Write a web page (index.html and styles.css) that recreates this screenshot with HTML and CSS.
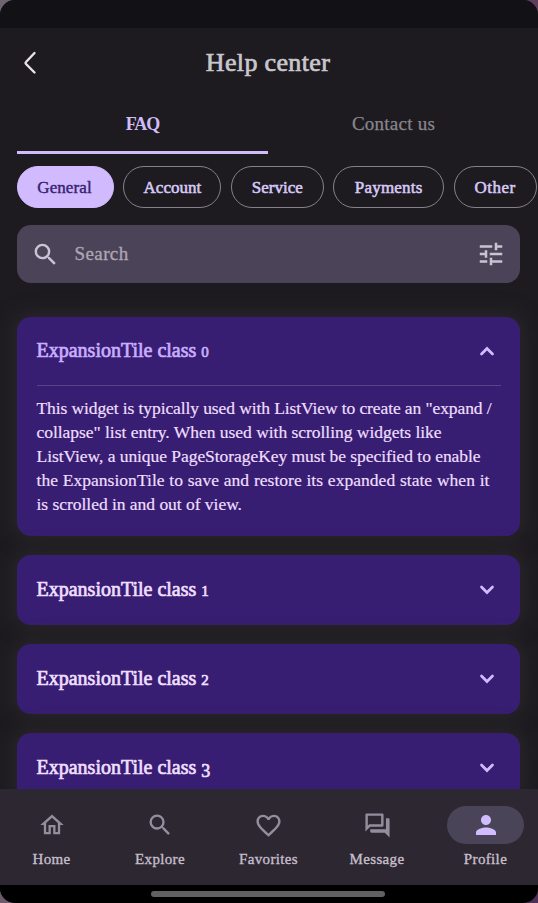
FILE: index.html
```html
<!DOCTYPE html>
<html lang="en">
<head>
<meta charset="utf-8">
<title>Help center</title>
<link rel="stylesheet" href="styles.css">
</head>
<body>
<div class="phone">
  <div class="status"></div>
  <header class="header">
    <svg class="back" width="14" height="24" viewBox="0 0 14 24"><path d="M11.500 2 L3 11 Q2 12 3 13 L11.500 21.500"/></svg>
    <h1>Help center</h1>
  </header>
  <nav class="tabs">
    <div class="tab active"><span>FAQ</span></div>
    <div class="tab"><span>Contact us</span></div>
  </nav>
  <div class="chips">
    <span class="chip selected">General</span>
    <span class="chip account">Account</span>
    <span class="chip service">Service</span>
    <span class="chip payments">Payments</span>
    <span class="chip other">Other</span>
  </div>
  <div class="search">
    <svg width="29" height="29" viewBox="0 0 24 24"><path d="M15.500 14h-.79l-.28-.27A6.470 6.470 0 0 0 16 9.500 6.500 6.500 0 1 0 9.500 16c1.610 0 3.090-.59 4.230-1.570l.27.28v.79l5 4.990L20.490 19l-4.990-5zm-6 0a4.500 4.500 0 1 1 0-9 4.500 4.500 0 0 1 0 9z"/></svg>
    <span>Search</span>
    <svg class="tune" width="30" height="30" viewBox="0 0 24 24"><path d="M3 17v2h6v-2H3zM3 5v2h10V5H3zm10 16v-2h8v-2h-8v-2h-2v6h2zM7 9v2H3v2h4v2h2V9H7zm14 4v-2H11v2h10zm-6-4h2V7h4V5h-4V3h-2v6z"/></svg>
  </div>
  <main class="list">
    <section class="tile open">
      <div class="tile-head"><h2>ExpansionTile class <i>0</i></h2><svg class="chev" width="16" height="10" viewBox="0 0 16 10"><path d="M2.500 8 L8 2.500 L13.500 8"/></svg></div>
      <div class="tile-body">
        <p class="l1">This widget is typically used with ListView to create an "expand /</p>
        <p class="l2">collapse" list entry. When used with scrolling widgets like</p>
        <p class="l3">ListView, a unique PageStorageKey must be specified to enable</p>
        <p class="l4">the ExpansionTile to save and restore its expanded state when it</p>
        <p class="l5">is scrolled in and out of view.</p>
      </div>
    </section>
    <section class="tile"><div class="tile-head"><h2>ExpansionTile class <i>1</i></h2><svg class="chev" width="16" height="10" viewBox="0 0 16 10"><path d="M2.500 2 L8 7.500 L13.500 2"/></svg></div></section>
    <section class="tile"><div class="tile-head"><h2>ExpansionTile class <i>2</i></h2><svg class="chev" width="16" height="10" viewBox="0 0 16 10"><path d="M2.500 2 L8 7.500 L13.500 2"/></svg></div></section>
    <section class="tile"><div class="tile-head"><h2>ExpansionTile class <i class="low">3</i></h2><svg class="chev" width="16" height="10" viewBox="0 0 16 10"><path d="M2.500 2 L8 7.500 L13.500 2"/></svg></div></section>
  </main>
  <nav class="bottom">
    <div class="item"><div class="pill"><svg width="28" height="28" viewBox="0 0 24 24"><path d="M12 5.690l5 4.500V18h-2v-6H9v6H7v-7.810l5-4.500M12 3L2 12h3v8h6v-6h2v6h6v-8h3L12 3z"/></svg></div><span>Home</span></div>
    <div class="item"><div class="pill"><svg width="28" height="28" viewBox="0 0 24 24"><path d="M15.500 14h-.79l-.28-.27A6.470 6.470 0 0 0 16 9.500 6.500 6.500 0 1 0 9.500 16c1.610 0 3.090-.59 4.230-1.570l.27.28v.79l5 4.990L20.490 19l-4.990-5zm-6 0a4.500 4.500 0 1 1 0-9 4.500 4.500 0 0 1 0 9z"/></svg></div><span>Explore</span></div>
    <div class="item"><div class="pill"><svg width="29" height="29" viewBox="0 0 24 24"><path d="M16.500 3c-1.740 0-3.410.81-4.500 2.090C10.910 3.810 9.240 3 7.500 3 4.420 3 2 5.420 2 8.500c0 3.780 3.400 6.860 8.550 11.540L12 21.350l1.450-1.320C18.600 15.360 22 12.280 22 8.500 22 5.420 19.580 3 16.500 3zm-4.400 15.550l-.1.1-.1-.1C7.140 14.240 4 11.390 4 8.500 4 6.500 5.500 5 7.500 5c1.540 0 3.040.99 3.570 2.360h1.870C13.460 5.990 14.960 5 16.500 5c2 0 3.500 1.500 3.500 3.500 0 2.890-3.140 5.740-7.900 10.050z"/></svg></div><span>Favorites</span></div>
    <div class="item"><div class="pill"><svg width="29" height="29" viewBox="0 0 24 24"><path d="M15 4v7H5.170L4 12.170V4h11m1-2H3c-.55 0-1 .45-1 1v14l4-4h10c.55 0 1-.45 1-1V3c0-.55-.45-1-1-1zm5 4h-2v9H6v2c0 .55.45 1 1 1h11l4 4V7c0-.55-.45-1-1-1z"/></svg></div><span>Message</span></div>
    <div class="item current"><div class="pill"><svg width="30" height="30" viewBox="0 0 24 24"><path d="M12 12c2.210 0 4-1.790 4-4s-1.790-4-4-4-4 1.790-4 4 1.790 4 4 4zm0 2c-2.670 0-8 1.340-8 4v2h16v-2c0-2.660-5.330-4-8-4z"/></svg></div><span>Profile</span></div>
  </nav>
  <div class="gesture"><div class="handle"></div></div>
</div>
</body>
</html>
```
FILE: styles.css
```css
* { box-sizing: border-box; }
body {
  margin: 0;
  background: linear-gradient(100deg, #6d6470, #6b4862 60%, #4b2f55);
  font-family: "Liberation Serif", serif;
}
h1, h2, p { margin: 0; font-weight: 400; white-space: nowrap; }
.phone {
  width: 538px;
  height: 903px;
  display: flex;
  flex-direction: column;
  overflow: hidden;
  background: #1d1b20;
  border-radius: 15px;
}
.status { height: 28px; background: #121116; flex: none; }
.header {
  height: 67px;
  flex: none;
  display: grid;
  grid-template-columns: 45px 1fr 47px;
  align-items: center;
  padding-top: 2px;
}
.back { margin-left: 23px; fill: none; stroke: #e9e2ee; stroke-width: 2.400; stroke-linecap: round; stroke-linejoin: round; }
.header h1 {
  text-align: center;
  font-size: 26px;
  line-height: 30px;
  letter-spacing: .35px;
  color: #c9c6cc;
  -webkit-text-stroke: .7px #c9c6cc;
}
.tabs { display: flex; height: 59px; padding: 0 17px; flex: none; }
.tab {
  flex: 1;
  text-align: center;
  font-size: 19px;
  line-height: 58px;
  letter-spacing: .25px;
  color: #89868d;
  -webkit-text-stroke: .25px #89868d;
  border-bottom: 3px solid transparent;
}
.tab.active { color: #cfbdf9; font-size: 18px; font-weight: 700; letter-spacing: -1px; border-color: #cfbdf9; -webkit-text-stroke: 0; }
.tab:last-child { padding-right: 2px; }
.chips { display: flex; gap: 9.400px; padding: 12px 0 0 17px; height: 71px; flex: none; align-items: flex-start; }
.chip {
  height: 42px;
  flex: none;
  border: 1.500px solid #85818a;
  border-radius: 21px;
  font-size: 17px;
  line-height: 42px;
  text-align: center;
  color: #d8c9f5;
  -webkit-text-stroke: .55px #d8c9f5;
  width: 98px;
}
.chip.selected { width: 97px; padding-right: 2px; background: #d1bbfe; border-color: #d1bbfe; color: #38206f; letter-spacing: .1px; -webkit-text-stroke: .4px #38206f; }
.service { width: 93px; }
.payments { width: 111px; letter-spacing: .2px; }
.other { width: 83px; letter-spacing: .45px; }
.search {
  height: 58px;
  flex: none;
  margin: 0 18px 0 17px;
  padding: 0 14px;
  display: flex;
  align-items: center;
  background: #4b4458;
  border-radius: 14px;
  color: #aea6b7;
  font-size: 19px;
  letter-spacing: .4px;
  -webkit-text-stroke: .3px #aea6b7;
}
.search span { margin-left: 14.500px; }
.search svg { fill: #cbc2d3; }
.search .tune { margin-left: auto; }
.list {
  flex: 1;
  min-height: 0;
  overflow: hidden;
  display: flex;
  flex-direction: column;
  gap: 19px;
  padding: 34px 18px 0 17px;
}
.tile {
  flex: none;
  height: 70px;
  padding: 0 19.500px;
  background: #381e72;
  border-radius: 14px;
  color: #efdfff;
  box-shadow: 0 0 18px 5px #29262a;
}
.tile.open { height: 219px; }
.tile-head { height: 69px; display: flex; align-items: center; justify-content: space-between; }
.open .tile-head { height: 68px; }
.tile h2 { font-size: 20px; line-height: 24px; -webkit-text-stroke: .7px currentColor; }
.tile h2 i { font-style: normal; font-size: 15px; }
.tile h2 .low { position: relative; top: 3px; font-size: 18px; }
.chev { margin-right: 6px; fill: none; stroke: #d0bcff; stroke-width: 2.700; stroke-linecap: round; }
.open h2 { color: #c9aeff; }
.tile-body { border-top: 1px solid #594386; padding-top: 10px; }
.tile-body p { font-size: 17.500px; line-height: 24px; text-align-last: justify; -webkit-text-stroke: .2px currentColor; }
.tile-body .l1 { width: 455px; letter-spacing: -.1px; }
.tile-body .l2 { width: 405px; letter-spacing: -.04px; }
.tile-body .l3 { width: 444px; letter-spacing: -.06px; }
.tile-body .l4 { width: 453px; letter-spacing: .03px; }
.tile-body .l5 { width: 205px; letter-spacing: -.03px; }
.bottom {
  height: 96px;
  flex: none;
  background: #2d2732;
  display: flex;
  gap: 31.500px;
  padding: 17px 0 0 13px;
}
.item {
  width: 77px;
  flex: none;
  display: flex;
  flex-direction: column;
  align-items: center;
  font-size: 15px;
  line-height: 18px;
  letter-spacing: .35px;
  color: #c6bfcb;
  -webkit-text-stroke: .35px #c6bfcb;
}
.pill { width: 77px; height: 38px; border-radius: 19px; display: flex; align-items: center; justify-content: center; margin-bottom: 6px; }
.pill svg { fill: #958d9c; }
.current .pill { background: #4a4458; }
.current svg { fill: #d0bcff; }
.gesture { height: 18px; background: #000; flex: none; display: flex; justify-content: center; padding: 6px 2px 0 0; }
.handle { width: 234px; height: 6px; border-radius: 3px; background: #616161; }
```
